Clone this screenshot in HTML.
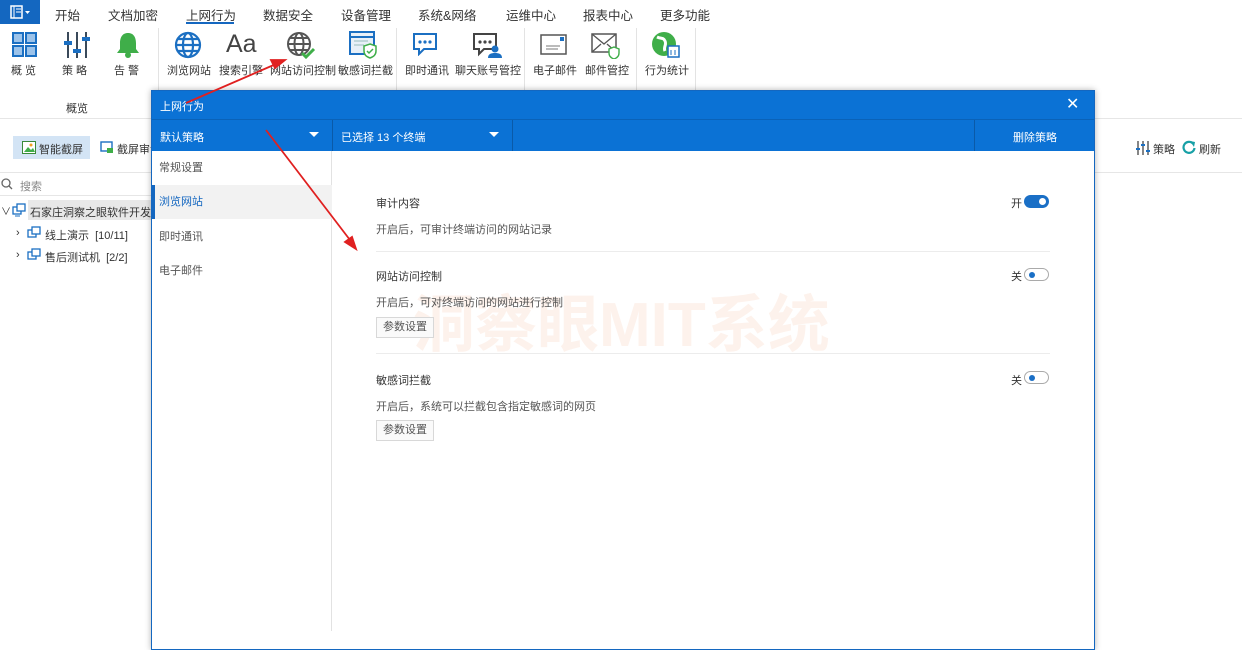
<!DOCTYPE html>
<html><head><meta charset="utf-8"><style>
*{margin:0;padding:0;box-sizing:border-box}
body{width:1242px;height:629px;overflow:hidden;background:#fff;font-family:"Liberation Sans","Noto Sans CJK SC",sans-serif;font-size:12px;color:#333;position:relative}
.a{position:absolute;white-space:nowrap}
.tab{position:absolute;top:5px;font-size:12.5px;color:#333}
.lbl{position:absolute;top:62px;font-size:11px;color:#333}
.sep{position:absolute;top:28px;width:1px;height:62px;background:#e3e3e3}
.tog{position:absolute;width:25px;height:13px;border-radius:7px}
.on{background:#1a6fc6}
.on:after{content:"";position:absolute;right:3px;top:3px;width:7px;height:7px;border-radius:50%;background:#fff}
.off{border:1px solid #aaa;background:#fff}
.off:after{content:"";position:absolute;left:4px;top:2.5px;width:6px;height:6px;border-radius:50%;background:#1a6fc6}
.btn{position:absolute;width:58px;height:21px;border:1px solid #d8d8d8;background:#fafafa;font-size:11px;color:#555;text-align:center;line-height:19px}
.side{position:absolute;left:0;width:180px;height:34px;line-height:34px;padding-left:7px;font-size:11px;color:#555}
</style></head><body>
<div class="a" style="left:0;top:0;width:40px;height:24px;background:#1467c0"></div>
<svg class="a" style="left:10px;top:5px" width="22" height="14"><rect x="1" y="1" width="11" height="12" fill="none" stroke="#fff" stroke-width="1.5"/><line x1="4" y1="1" x2="4" y2="13" stroke="#fff"/><line x1="6" y1="4" x2="11" y2="4" stroke="#fff"/><line x1="6" y1="7" x2="11" y2="7" stroke="#fff"/><path d="M15 6l2.5 3 2.5-3z" fill="#fff"/></svg>
<div class="tab" style="left:55px">开始</div>
<div class="tab" style="left:108px">文档加密</div>
<div class="tab" style="left:186px">上网行为</div>
<div class="a" style="left:186px;top:22px;width:48px;height:2px;background:#1467c0"></div>
<div class="tab" style="left:263px">数据安全</div>
<div class="tab" style="left:341px">设备管理</div>
<div class="tab" style="left:418px">系统&amp;网络</div>
<div class="tab" style="left:506px">运维中心</div>
<div class="tab" style="left:583px">报表中心</div>
<div class="tab" style="left:660px">更多功能</div>
<svg class="a" style="left:12px;top:32px" width="26" height="26"><g fill="#9cc3ea" stroke="#1b6fc2" stroke-width="2"><rect x="1" y="1" width="10" height="10"/><rect x="14" y="1" width="10" height="10"/><rect x="1" y="14" width="10" height="10"/><rect x="14" y="14" width="10" height="10"/></g></svg>
<svg class="a" style="left:64px;top:31px" width="26" height="28"><g stroke="#3a4a5a" stroke-width="2"><line x1="4" y1="1" x2="4" y2="27"/><line x1="13" y1="1" x2="13" y2="27"/><line x1="22" y1="1" x2="22" y2="27"/></g><g fill="#1b6fc2"><rect x="0" y="10" width="8" height="4"/><rect x="9" y="18" width="8" height="4"/><rect x="18" y="6" width="8" height="4"/></g></svg>
<svg class="a" style="left:115px;top:31px" width="26" height="28"><path d="M13 2c-6 0-8 5-8 10v6l-3 4h22l-3-4v-6c0-5-2-10-8-10z" fill="#3fae49"/><circle cx="13" cy="24" r="3" fill="#3fae49"/></svg>
<div class="lbl" style="left:11px">概 览</div>
<div class="lbl" style="left:62px">策 略</div>
<div class="lbl" style="left:114px">告 警</div>
<div class="a" style="left:66px;top:100px;font-size:11px">概览</div>
<div class="sep" style="left:158px"></div>
<svg class="a" style="left:174px;top:31px" width="28" height="28"><g fill="none" stroke="#1b6fc2" stroke-width="2.2"><circle cx="14" cy="14" r="12"/><ellipse cx="14" cy="14" rx="5" ry="12"/><line x1="2" y1="14" x2="26" y2="14"/><path d="M4 8h20M4 20h20"/></g></svg>
<div class="a" style="left:226px;top:30px;font-size:25px;color:#444">Aa</div>
<svg class="a" style="left:286px;top:31px" width="30" height="28"><g fill="none" stroke="#555" stroke-width="2"><circle cx="13" cy="13" r="11"/><ellipse cx="13" cy="13" rx="4.5" ry="11"/><line x1="2" y1="13" x2="24" y2="13"/><path d="M4 7h18M4 19h18"/></g><path d="M16 22l4 4 8-8" stroke="#3fae49" stroke-width="3" fill="none"/></svg>
<svg class="a" style="left:349px;top:31px" width="30" height="28"><rect x="1" y="1" width="24" height="22" fill="#e8f0f8" stroke="#1b6fc2" stroke-width="2"/><line x1="1" y1="6" x2="25" y2="6" stroke="#1b6fc2" stroke-width="2"/><path d="M5 10h14M5 14h10" stroke="#9bb" /><path d="M21 13l6 2v5c0 4-3 6-6 7-3-1-6-3-6-7v-5z" fill="#fff" stroke="#3fae49" stroke-width="1.5"/><path d="M18 20l2 2 4-4" stroke="#3fae49" fill="none" stroke-width="1.5"/></svg>
<div class="lbl" style="left:167px">浏览网站</div>
<div class="lbl" style="left:219px">搜索引擎</div>
<div class="lbl" style="left:270px">网站访问控制</div>
<div class="lbl" style="left:338px">敏感词拦截</div>
<div class="sep" style="left:396px"></div>
<svg class="a" style="left:412px;top:32px" width="28" height="24"><path d="M2 2h22v15h-12l-5 5v-5h-5z" fill="#fff" stroke="#1b6fc2" stroke-width="2"/><g fill="#1b6fc2"><circle cx="8" cy="10" r="1.6"/><circle cx="13" cy="10" r="1.6"/><circle cx="18" cy="10" r="1.6"/></g></svg>
<svg class="a" style="left:472px;top:32px" width="30" height="26"><path d="M2 2h22v15h-12l-5 5v-5h-5z" fill="#fff" stroke="#444" stroke-width="2"/><g fill="#444"><circle cx="8" cy="10" r="1.6"/><circle cx="13" cy="10" r="1.6"/><circle cx="18" cy="10" r="1.6"/></g><circle cx="23" cy="17" r="3.5" fill="#1b6fc2"/><path d="M16 26c0-4 3-5 7-5s7 1 7 5z" fill="#1b6fc2"/></svg>
<div class="lbl" style="left:405px">即时通讯</div>
<div class="lbl" style="left:455px">聊天账号管控</div>
<div class="sep" style="left:524px"></div>
<svg class="a" style="left:540px;top:34px" width="28" height="22"><rect x="1" y="1" width="25" height="19" fill="#fff" stroke="#555" stroke-width="1.5"/><rect x="20" y="3" width="4" height="4" fill="#1b6fc2"/><path d="M6 12h14M6 15h12" stroke="#777"/></svg>
<svg class="a" style="left:591px;top:33px" width="30" height="26"><rect x="1" y="1" width="24" height="18" fill="#fff" stroke="#555" stroke-width="1.5"/><path d="M1 1l12 10 12-10M1 19l9-8M25 19l-9-8" stroke="#555" fill="none" stroke-width="1.3"/><path d="M23 14l5 2v4c0 3-2 5-5 6-3-1-5-3-5-6v-4z" fill="#fff" stroke="#3fae49" stroke-width="1.4"/></svg>
<div class="lbl" style="left:533px">电子邮件</div>
<div class="lbl" style="left:585px">邮件管控</div>
<div class="sep" style="left:636px"></div>
<svg class="a" style="left:651px;top:31px" width="30" height="28"><circle cx="13" cy="13" r="12" fill="#3fae49"/><path d="M6 6c4 2 6 0 8 4s-2 6 0 10" stroke="#fff" stroke-width="3" fill="none"/><rect x="17" y="15" width="11" height="11" fill="#fff" stroke="#1b6fc2" stroke-width="1.5"/><path d="M20 19v5M24 19v5" stroke="#1b6fc2"/></svg>
<div class="lbl" style="left:645px">行为统计</div>
<div class="sep" style="left:695px"></div>
<div class="a" style="left:0;top:118px;width:1242px;height:1px;background:#e6e6e6"></div>
<div class="a" style="left:13px;top:136px;width:77px;height:23px;background:#d3e4f5"></div>
<svg class="a" style="left:22px;top:141px" width="14" height="13"><rect x=".5" y=".5" width="13" height="12" fill="#fff" stroke="#3a8a3a"/><path d="M2 11l4-5 3 3 2-2 2 4z" fill="#3fae49"/><circle cx="9" cy="4" r="1.5" fill="#f0a020"/></svg>
<div class="a" style="left:39px;top:141px;font-size:11px">智能截屏</div>
<svg class="a" style="left:100px;top:141px" width="14" height="13"><rect x="1" y="1" width="11" height="9" fill="none" stroke="#1b6fc2" stroke-width="1.4"/><rect x="7" y="7" width="6" height="5" fill="#3fae49"/></svg>
<div class="a" style="left:117px;top:141px;font-size:11px">截屏审计</div>
<svg class="a" style="left:1135px;top:140px" width="16" height="15"><g stroke="#444" stroke-width="1.3"><line x1="3" y1="1" x2="3" y2="15"/><line x1="8" y1="1" x2="8" y2="15"/><line x1="13" y1="1" x2="13" y2="15"/></g><g fill="#1b6fc2"><rect x="1" y="8" width="4" height="2"/><rect x="6" y="4" width="4" height="2"/><rect x="11" y="10" width="4" height="2"/></g></svg>
<div class="a" style="left:1153px;top:141px;font-size:11px">策略</div>
<svg class="a" style="left:1182px;top:140px" width="14" height="14"><path d="M11 3.5A5.5 5.5 0 1 0 12.5 8" fill="none" stroke="#17a0a6" stroke-width="2.2"/><path d="M8 1l5 1-1 5z" fill="#17a0a6"/></svg>
<div class="a" style="left:1199px;top:141px;font-size:11px">刷新</div>
<div class="a" style="left:0;top:172px;width:1242px;height:1px;background:#e6e6e6"></div>
<svg class="a" style="left:1px;top:178px" width="12" height="12"><circle cx="5" cy="5" r="4" fill="none" stroke="#666" stroke-width="1.3"/><line x1="8" y1="8" x2="11" y2="11" stroke="#666" stroke-width="1.3"/></svg>
<div class="a" style="left:20px;top:178px;font-size:11px;color:#888">搜索</div>
<div class="a" style="left:0;top:195px;width:160px;height:1px;background:#e6e6e6"></div>
<div class="a" style="left:28px;top:200px;width:130px;height:20px;background:#e8e8e8"></div>
<div class="a" style="left:1px;top:203px;font-size:10px">∨</div>
<svg class="a" style="left:12px;top:203px" width="15" height="14"><rect x="1" y="4" width="8" height="7" fill="none" stroke="#1b6fc2" stroke-width="1.3"/><rect x="5" y="1" width="8" height="7" fill="#fff" stroke="#1b6fc2" stroke-width="1.3"/><line x1="3" y1="13" x2="8" y2="13" stroke="#1b6fc2"/></svg>
<div class="a" style="left:30px;top:204px;font-size:11px">石家庄洞察之眼软件开发有</div>
<div class="a" style="left:16px;top:227px;font-size:11px">›</div>
<svg class="a" style="left:27px;top:226px" width="15" height="14"><rect x="1" y="4" width="8" height="7" fill="none" stroke="#1b6fc2" stroke-width="1.3"/><rect x="5" y="1" width="8" height="7" fill="#fff" stroke="#1b6fc2" stroke-width="1.3"/></svg>
<div class="a" style="left:45px;top:227px;font-size:11px">线上演示 &nbsp;[10/11]</div>
<div class="a" style="left:16px;top:249px;font-size:11px">›</div>
<svg class="a" style="left:27px;top:248px" width="15" height="14"><rect x="1" y="4" width="8" height="7" fill="none" stroke="#1b6fc2" stroke-width="1.3"/><rect x="5" y="1" width="8" height="7" fill="#fff" stroke="#1b6fc2" stroke-width="1.3"/></svg>
<div class="a" style="left:45px;top:249px;font-size:11px">售后测试机 &nbsp;[2/2]</div>
<div class="a" style="left:151px;top:90px;width:944px;height:560px;background:#fff;border:1px solid #1467c0;box-shadow:0 0 6px rgba(0,0,0,.3)"></div>
<div class="a" style="left:152px;top:91px;width:942px;height:60px;background:#0b72d5"></div>
<div class="a" style="left:152px;top:119px;width:942px;height:1px;background:#0a62b8"></div>
<div class="a" style="left:160px;top:98px;font-size:11px;color:#fff">上网行为</div>
<div class="a" style="left:1066px;top:94px;font-size:16px;color:#fff">✕</div>
<div class="a" style="left:160px;top:129px;font-size:11px;color:#fff">默认策略</div>
<div class="a" style="left:309px;top:132px;width:0;height:0;border-left:5px solid transparent;border-right:5px solid transparent;border-top:5px solid #fff"></div>
<div class="a" style="left:332px;top:120px;width:1px;height:31px;background:#0a5aa8"></div>
<div class="a" style="left:341px;top:129px;font-size:11px;color:#fff">已选择 13 个终端</div>
<div class="a" style="left:489px;top:132px;width:0;height:0;border-left:5px solid transparent;border-right:5px solid transparent;border-top:5px solid #fff"></div>
<div class="a" style="left:512px;top:120px;width:1px;height:31px;background:#0a5aa8"></div>
<div class="a" style="left:974px;top:120px;width:1px;height:31px;background:#0a5aa8"></div>
<div class="a" style="left:1013px;top:129px;font-size:11px;color:#fff">删除策略</div>
<div class="a" style="left:152px;top:151px;width:180px;height:480px;border-right:1px solid #e2e2e2"></div>
<div class="a" style="left:152px;top:151px;width:180px">
<div class="side" style="top:0">常规设置</div>
<div class="side" style="top:34px;background:#f2f2f2;color:#1467c0;border-left:3px solid #1467c0;padding-left:4px">浏览网站</div>
<div class="side" style="top:69px">即时通讯</div>
<div class="side" style="top:103px">电子邮件</div>
</div>
<div class="a" style="left:413px;top:274px;font-size:62px;font-weight:bold;color:#fdf2ec;letter-spacing:0px">洞察眼MIT系统</div>
<div class="a" style="left:376px;top:195px;font-size:11px">审计内容</div>
<div class="a" style="left:1011px;top:195px;font-size:11px">开</div>
<div class="tog on" style="left:1024px;top:195px"></div>
<div class="a" style="left:376px;top:221px;font-size:11px;color:#555">开启后，可审计终端访问的网站记录</div>
<div class="a" style="left:376px;top:251px;width:674px;height:1px;background:#ececec"></div>
<div class="a" style="left:376px;top:268px;font-size:11px">网站访问控制</div>
<div class="a" style="left:1011px;top:268px;font-size:11px">关</div>
<div class="tog off" style="left:1024px;top:268px"></div>
<div class="a" style="left:376px;top:294px;font-size:11px;color:#555">开启后，可对终端访问的网站进行控制</div>
<div class="btn" style="left:376px;top:317px">参数设置</div>
<div class="a" style="left:376px;top:353px;width:674px;height:1px;background:#ececec"></div>
<div class="a" style="left:376px;top:372px;font-size:11px">敏感词拦截</div>
<div class="a" style="left:1011px;top:372px;font-size:11px">关</div>
<div class="tog off" style="left:1024px;top:371px"></div>
<div class="a" style="left:376px;top:398px;font-size:11px;color:#555">开启后，系统可以拦截包含指定敏感词的网页</div>
<div class="btn" style="left:376px;top:420px">参数设置</div>
<svg class="a" style="left:0;top:0" width="1242" height="629"><g stroke="#e02020" stroke-width="1.8" fill="#e02020"><line x1="186" y1="103" x2="276" y2="64"/><path d="M285 60l-14 0 4 8z"/><line x1="266" y1="130" x2="350" y2="240"/><path d="M356 249l-11-7 7-5z"/></g></svg>
</body></html>
